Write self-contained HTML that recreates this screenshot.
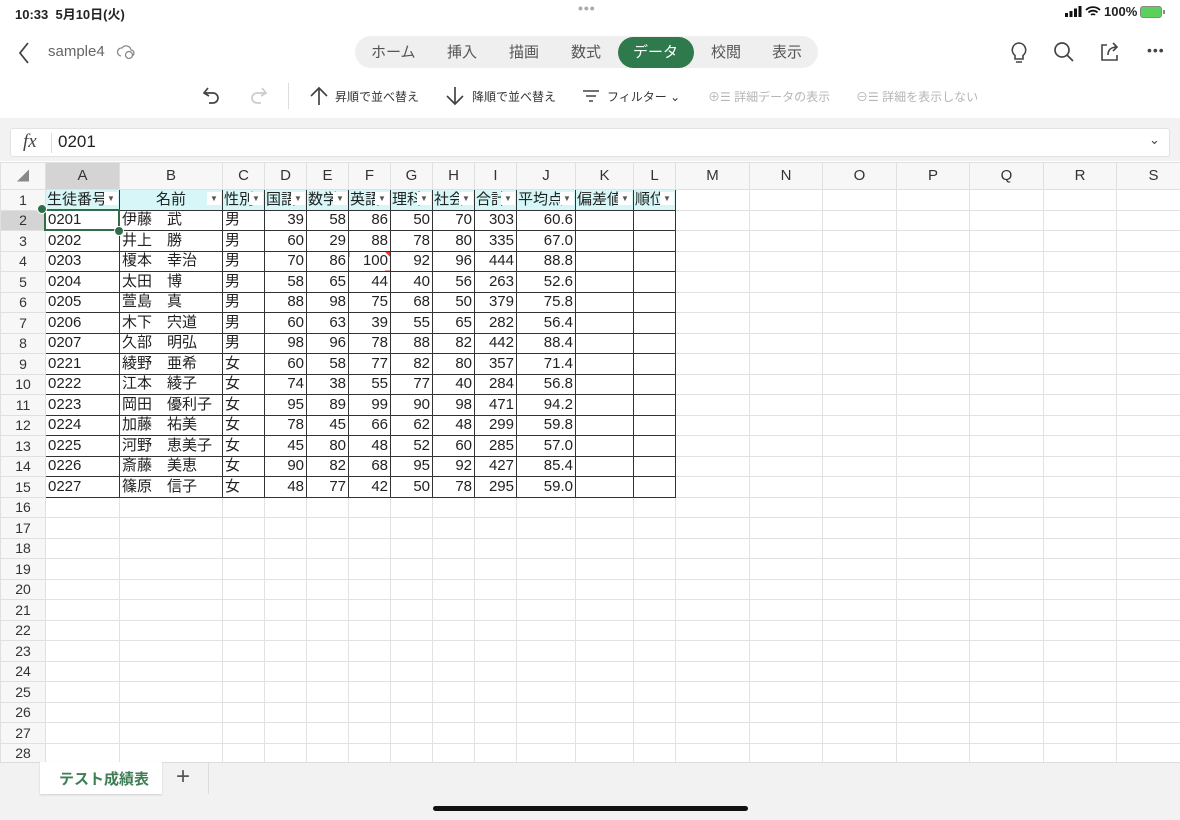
<!DOCTYPE html>
<html><head><meta charset="utf-8">
<style>
*{box-sizing:border-box;margin:0;padding:0}
body{width:1180px;height:820px;overflow:hidden;background:#fff;font-family:"Liberation Sans","Noto Sans CJK JP",sans-serif;position:relative;color:#222}
.abs{position:absolute}
.status{top:0;left:0;width:1180px;height:24px;font-size:13px;font-weight:bold}
.pill{left:355px;top:36px;width:463px;height:32px;background:#efefef;border-radius:16px}
.tab{position:absolute;top:41px;font-size:15px;color:#555}
.cmd{position:absolute;top:88px;font-size:12px;color:#333}
.gray{color:#b5b5b5}
.band{left:0;top:118px;width:1180px;height:43px;background:#f2f2f2}
.fx{left:10px;top:128px;width:1160px;height:29px;background:#fff;border:1px solid #e2e2e2;border-radius:3px}
table{position:absolute;left:0;top:162px;width:1190px;border-collapse:collapse;table-layout:fixed;font-family:"Liberation Sans","Noto Sans CJK JP",sans-serif}
td{border:1px solid #e2e2e2;height:20.5px;font-size:15px;padding:0 2px;white-space:nowrap;overflow:hidden;line-height:18px}
tr.ch td{height:27px;background:#f7f7f7;text-align:center;color:#333;font-size:15px;border-color:#e0e0e0}
td.rh{background:#f7f7f7;text-align:center;color:#333;font-size:14px;border-color:#e0e0e0}
td.d{border:1px solid #333}
td.r{text-align:right}
td.h{background:#d6f6f7;position:relative;border:1px solid #333;padding:0 1px}
td.h i{position:absolute;right:1px;top:2px;width:14px;height:13px;background:#fff;font-style:normal;font-size:8px;line-height:13px;text-align:center;color:#555}
.tabbar{left:0;top:762px;width:1180px;height:58px;background:#f2f2f2;border-top:1px solid #ddd}
</style></head><body>
<div class="abs status"><span class="abs" style="left:15px;top:4px">10:33&nbsp;&nbsp;5月10日(火)</span>
<span class="abs" style="left:578px;top:0px;color:#aaa;font-size:14px;letter-spacing:1px">•••</span>
<svg class="abs" style="left:1065px;top:6px" width="18" height="12"><rect x="0" y="7" width="3" height="4" fill="#111"/><rect x="4.5" y="5" width="3" height="6" fill="#111"/><rect x="9" y="2.5" width="3" height="8.5" fill="#111"/><rect x="13.5" y="0" width="3" height="11" fill="#111"/></svg>
<svg class="abs" style="left:1085px;top:5px" width="16" height="13"><path d="M1 5a10 10 0 0 1 14 0M3.5 7.5a6.5 6.5 0 0 1 9 0M6 10a3 3 0 0 1 4 0" stroke="#111" stroke-width="1.8" fill="none"/></svg>
<span class="abs" style="left:1104px;top:4px">100%</span>
<span class="abs" style="left:1140px;top:6px;width:22px;height:12px;border:1px solid #888;border-radius:3px;background:#5ad15a"></span>
<span class="abs" style="left:1163px;top:10px;width:2px;height:4px;background:#888"></span></div>

<svg class="abs" style="left:16px;top:40px" width="16" height="26"><path d="M12 3 L4 13 L12 23" stroke="#444" stroke-width="1.8" fill="none"/></svg>
<span class="abs" style="left:48px;top:43px;font-size:15px;color:#666">sample4</span>
<svg class="abs" style="left:116px;top:43px" width="20" height="18"><path d="M5 13a4 4 0 0 1 1-8 5 5 0 0 1 9 2 3 3 0 0 1 0 6" stroke="#888" fill="none" stroke-width="1.3"/><circle cx="13" cy="12" r="3.5" stroke="#888" fill="#fff" stroke-width="1.3"/></svg>

<div class="abs pill"></div>
<span class="tab" style="left:371px">ホーム</span>
<span class="tab" style="left:447px">挿入</span>
<span class="tab" style="left:509px">描画</span>
<span class="tab" style="left:571px">数式</span>
<div class="abs" style="left:618px;top:37px;width:76px;height:31px;background:#2f7a4c;border-radius:16px"></div>
<span class="tab" style="left:633px;color:#fff">データ</span>
<span class="tab" style="left:711px">校閲</span>
<span class="tab" style="left:772px">表示</span>

<svg class="abs" style="left:1008px;top:40px" width="22" height="26"><path d="M11 3a7 7 0 0 0-4 12.5V19h8v-3.5A7 7 0 0 0 11 3zM8 22h6" stroke="#444" stroke-width="1.6" fill="none"/></svg>
<svg class="abs" style="left:1052px;top:40px" width="24" height="24"><circle cx="10" cy="10" r="7" stroke="#444" stroke-width="1.7" fill="none"/><path d="M15 15l6 6" stroke="#444" stroke-width="1.7"/></svg>
<svg class="abs" style="left:1098px;top:40px" width="24" height="24"><path d="M9 5H4v15h15v-5M10 15c0-5 3-8 9-8M15 3l4 4-4 4" stroke="#444" stroke-width="1.6" fill="none"/></svg>
<span class="abs" style="left:1147px;top:42px;font-size:14px;color:#444;letter-spacing:1px">•••</span>

<svg class="abs" style="left:200px;top:84px" width="24" height="24"><path d="M8 4L4 9l5 3M4 9h9a5 5 0 0 1 0 10H9" stroke="#444" stroke-width="1.7" fill="none"/></svg>
<svg class="abs" style="left:246px;top:84px" width="24" height="24"><path d="M16 4l4 5-5 3M20 9h-9a5 5 0 0 0 0 10h4" stroke="#ccc" stroke-width="1.7" fill="none"/></svg>
<div class="abs" style="left:288px;top:83px;width:1px;height:26px;background:#ddd"></div>
<svg class="abs" style="left:308px;top:85px" width="22" height="22"><path d="M11 3v17M3 11l8-8 8 8" stroke="#444" stroke-width="1.7" fill="none"/></svg>
<span class="cmd" style="left:335px">昇順で並べ替え</span>
<svg class="abs" style="left:444px;top:85px" width="22" height="22"><path d="M11 2v17M3 11l8 8 8-8" stroke="#444" stroke-width="1.7" fill="none"/></svg>
<span class="cmd" style="left:472px">降順で並べ替え</span>
<svg class="abs" style="left:582px;top:88px" width="18" height="16"><path d="M1 3h16M4 8h10M7 13h4" stroke="#444" stroke-width="1.5"/></svg>
<span class="cmd" style="left:607px">フィルター ⌄</span>
<span class="cmd gray" style="left:708px">⊕☰ 詳細データの表示</span>
<span class="cmd gray" style="left:856px">⊖☰ 詳細を表示しない</span>

<div class="abs band"></div>
<div class="abs fx"><span class="abs" style="left:12px;top:2px;font-family:'Liberation Serif',serif;font-style:italic;font-size:19px;color:#444">fx</span>
<div class="abs" style="left:40px;top:4px;width:1px;height:20px;background:#ddd"></div>
<span class="abs" style="left:47px;top:3px;font-size:17px;color:#222">0201</span>
<span class="abs" style="left:1138px;top:3px;font-size:13px;color:#444">⌄</span></div>

<table>
<colgroup><col style="width:45px"><col style="width:74px"><col style="width:103px"><col style="width:42px"><col style="width:42px"><col style="width:42px"><col style="width:42px"><col style="width:42px"><col style="width:42px"><col style="width:42px"><col style="width:59px"><col style="width:58px"><col style="width:42px"><col style="width:74px"><col style="width:73px"><col style="width:74px"><col style="width:73px"><col style="width:74px"><col style="width:73px"><col style="width:74px"></colgroup>
<tr class="ch"><td style="color:#888;font-size:12px">◢</td><td style="background:#d4d4d4">A</td><td>B</td><td>C</td><td>D</td><td>E</td><td>F</td><td>G</td><td>H</td><td>I</td><td>J</td><td>K</td><td>L</td><td>M</td><td>N</td><td>O</td><td>P</td><td>Q</td><td>R</td><td>S</td></tr>
<tr><td class="rh">1</td><td class="h">生徒番号<i>▼</i></td><td class="h" style="text-align:center">名前<i>▼</i></td><td class="h">性別<i>▼</i></td><td class="h">国語<i>▼</i></td><td class="h">数学<i>▼</i></td><td class="h">英語<i>▼</i></td><td class="h">理科<i>▼</i></td><td class="h">社会<i>▼</i></td><td class="h">合計<i>▼</i></td><td class="h">平均点<i>▼</i></td><td class="h">偏差値<i>▼</i></td><td class="h">順位<i>▼</i></td><td></td><td></td><td></td><td></td><td></td><td></td><td></td></tr>
<tr><td class="rh" style="background:#d4d4d4">2</td><td class="d">0201</td><td class="d">伊藤　武</td><td class="d">男</td><td class="d r">39</td><td class="d r">58</td><td class="d r">86</td><td class="d r">50</td><td class="d r">70</td><td class="d r">303</td><td class="d r">60.6</td><td class="d"></td><td class="d"></td><td></td><td></td><td></td><td></td><td></td><td></td><td></td></tr>
<tr><td class="rh">3</td><td class="d">0202</td><td class="d">井上　勝</td><td class="d">男</td><td class="d r">60</td><td class="d r">29</td><td class="d r">88</td><td class="d r">78</td><td class="d r">80</td><td class="d r">335</td><td class="d r">67.0</td><td class="d"></td><td class="d"></td><td></td><td></td><td></td><td></td><td></td><td></td><td></td></tr>
<tr><td class="rh">4</td><td class="d">0203</td><td class="d">榎本　幸治</td><td class="d">男</td><td class="d r">70</td><td class="d r">86</td><td class="d r" style="background:linear-gradient(225deg,#e33 4px,transparent 4px)">100</td><td class="d r">92</td><td class="d r">96</td><td class="d r">444</td><td class="d r">88.8</td><td class="d"></td><td class="d"></td><td></td><td></td><td></td><td></td><td></td><td></td><td></td></tr>
<tr><td class="rh">5</td><td class="d">0204</td><td class="d">太田　博</td><td class="d">男</td><td class="d r">58</td><td class="d r">65</td><td class="d r">44</td><td class="d r">40</td><td class="d r">56</td><td class="d r">263</td><td class="d r">52.6</td><td class="d"></td><td class="d"></td><td></td><td></td><td></td><td></td><td></td><td></td><td></td></tr>
<tr><td class="rh">6</td><td class="d">0205</td><td class="d">萱島　真</td><td class="d">男</td><td class="d r">88</td><td class="d r">98</td><td class="d r">75</td><td class="d r">68</td><td class="d r">50</td><td class="d r">379</td><td class="d r">75.8</td><td class="d"></td><td class="d"></td><td></td><td></td><td></td><td></td><td></td><td></td><td></td></tr>
<tr><td class="rh">7</td><td class="d">0206</td><td class="d">木下　宍道</td><td class="d">男</td><td class="d r">60</td><td class="d r">63</td><td class="d r">39</td><td class="d r">55</td><td class="d r">65</td><td class="d r">282</td><td class="d r">56.4</td><td class="d"></td><td class="d"></td><td></td><td></td><td></td><td></td><td></td><td></td><td></td></tr>
<tr><td class="rh">8</td><td class="d">0207</td><td class="d">久部　明弘</td><td class="d">男</td><td class="d r">98</td><td class="d r">96</td><td class="d r">78</td><td class="d r">88</td><td class="d r">82</td><td class="d r">442</td><td class="d r">88.4</td><td class="d"></td><td class="d"></td><td></td><td></td><td></td><td></td><td></td><td></td><td></td></tr>
<tr><td class="rh">9</td><td class="d">0221</td><td class="d">綾野　亜希</td><td class="d">女</td><td class="d r">60</td><td class="d r">58</td><td class="d r">77</td><td class="d r">82</td><td class="d r">80</td><td class="d r">357</td><td class="d r">71.4</td><td class="d"></td><td class="d"></td><td></td><td></td><td></td><td></td><td></td><td></td><td></td></tr>
<tr><td class="rh">10</td><td class="d">0222</td><td class="d">江本　綾子</td><td class="d">女</td><td class="d r">74</td><td class="d r">38</td><td class="d r">55</td><td class="d r">77</td><td class="d r">40</td><td class="d r">284</td><td class="d r">56.8</td><td class="d"></td><td class="d"></td><td></td><td></td><td></td><td></td><td></td><td></td><td></td></tr>
<tr><td class="rh">11</td><td class="d">0223</td><td class="d">岡田　優利子</td><td class="d">女</td><td class="d r">95</td><td class="d r">89</td><td class="d r">99</td><td class="d r">90</td><td class="d r">98</td><td class="d r">471</td><td class="d r">94.2</td><td class="d"></td><td class="d"></td><td></td><td></td><td></td><td></td><td></td><td></td><td></td></tr>
<tr><td class="rh">12</td><td class="d">0224</td><td class="d">加藤　祐美</td><td class="d">女</td><td class="d r">78</td><td class="d r">45</td><td class="d r">66</td><td class="d r">62</td><td class="d r">48</td><td class="d r">299</td><td class="d r">59.8</td><td class="d"></td><td class="d"></td><td></td><td></td><td></td><td></td><td></td><td></td><td></td></tr>
<tr><td class="rh">13</td><td class="d">0225</td><td class="d">河野　恵美子</td><td class="d">女</td><td class="d r">45</td><td class="d r">80</td><td class="d r">48</td><td class="d r">52</td><td class="d r">60</td><td class="d r">285</td><td class="d r">57.0</td><td class="d"></td><td class="d"></td><td></td><td></td><td></td><td></td><td></td><td></td><td></td></tr>
<tr><td class="rh">14</td><td class="d">0226</td><td class="d">斎藤　美恵</td><td class="d">女</td><td class="d r">90</td><td class="d r">82</td><td class="d r">68</td><td class="d r">95</td><td class="d r">92</td><td class="d r">427</td><td class="d r">85.4</td><td class="d"></td><td class="d"></td><td></td><td></td><td></td><td></td><td></td><td></td><td></td></tr>
<tr><td class="rh">15</td><td class="d">0227</td><td class="d">篠原　信子</td><td class="d">女</td><td class="d r">48</td><td class="d r">77</td><td class="d r">42</td><td class="d r">50</td><td class="d r">78</td><td class="d r">295</td><td class="d r">59.0</td><td class="d"></td><td class="d"></td><td></td><td></td><td></td><td></td><td></td><td></td><td></td></tr>
<tr><td class="rh">16</td><td></td><td></td><td></td><td></td><td></td><td></td><td></td><td></td><td></td><td></td><td></td><td></td><td></td><td></td><td></td><td></td><td></td><td></td><td></td></tr>
<tr><td class="rh">17</td><td></td><td></td><td></td><td></td><td></td><td></td><td></td><td></td><td></td><td></td><td></td><td></td><td></td><td></td><td></td><td></td><td></td><td></td><td></td></tr>
<tr><td class="rh">18</td><td></td><td></td><td></td><td></td><td></td><td></td><td></td><td></td><td></td><td></td><td></td><td></td><td></td><td></td><td></td><td></td><td></td><td></td><td></td></tr>
<tr><td class="rh">19</td><td></td><td></td><td></td><td></td><td></td><td></td><td></td><td></td><td></td><td></td><td></td><td></td><td></td><td></td><td></td><td></td><td></td><td></td><td></td></tr>
<tr><td class="rh">20</td><td></td><td></td><td></td><td></td><td></td><td></td><td></td><td></td><td></td><td></td><td></td><td></td><td></td><td></td><td></td><td></td><td></td><td></td><td></td></tr>
<tr><td class="rh">21</td><td></td><td></td><td></td><td></td><td></td><td></td><td></td><td></td><td></td><td></td><td></td><td></td><td></td><td></td><td></td><td></td><td></td><td></td><td></td></tr>
<tr><td class="rh">22</td><td></td><td></td><td></td><td></td><td></td><td></td><td></td><td></td><td></td><td></td><td></td><td></td><td></td><td></td><td></td><td></td><td></td><td></td><td></td></tr>
<tr><td class="rh">23</td><td></td><td></td><td></td><td></td><td></td><td></td><td></td><td></td><td></td><td></td><td></td><td></td><td></td><td></td><td></td><td></td><td></td><td></td><td></td></tr>
<tr><td class="rh">24</td><td></td><td></td><td></td><td></td><td></td><td></td><td></td><td></td><td></td><td></td><td></td><td></td><td></td><td></td><td></td><td></td><td></td><td></td><td></td></tr>
<tr><td class="rh">25</td><td></td><td></td><td></td><td></td><td></td><td></td><td></td><td></td><td></td><td></td><td></td><td></td><td></td><td></td><td></td><td></td><td></td><td></td><td></td></tr>
<tr><td class="rh">26</td><td></td><td></td><td></td><td></td><td></td><td></td><td></td><td></td><td></td><td></td><td></td><td></td><td></td><td></td><td></td><td></td><td></td><td></td><td></td></tr>
<tr><td class="rh">27</td><td></td><td></td><td></td><td></td><td></td><td></td><td></td><td></td><td></td><td></td><td></td><td></td><td></td><td></td><td></td><td></td><td></td><td></td><td></td></tr>
<tr><td class="rh">28</td><td></td><td></td><td></td><td></td><td></td><td></td><td></td><td></td><td></td><td></td><td></td><td></td><td></td><td></td><td></td><td></td><td></td><td></td><td></td></tr>
</table>

<div class="abs" style="left:44px;top:209px;width:76px;height:22px;border:2px solid #2f6e47"></div>
<div class="abs" style="left:37px;top:204px;width:10px;height:10px;border-radius:50%;background:#2f6e47;border:1px solid #fff"></div>
<div class="abs" style="left:114px;top:226px;width:10px;height:10px;border-radius:50%;background:#2f6e47;border:1px solid #fff"></div>

<div class="abs tabbar"></div>
<div class="abs" style="left:40px;top:762px;width:122px;height:32px;background:#fff;box-shadow:0 1px 2px rgba(0,0,0,.15)"></div>
<span class="abs" style="left:59px;top:768px;font-size:15px;font-weight:bold;color:#3f7d55">テスト成績表</span>
<span class="abs" style="left:176px;top:763px;font-size:24px;color:#555;font-weight:300">+</span>
<div class="abs" style="left:208px;top:762px;width:1px;height:32px;background:#ddd"></div>
<div class="abs" style="left:433px;top:806px;width:315px;height:5px;border-radius:3px;background:#111"></div>
</body></html>
